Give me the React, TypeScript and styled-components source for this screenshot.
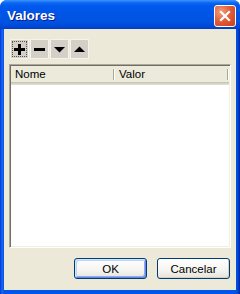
import styled, { createGlobalStyle } from "styled-components";

const GlobalStyle = createGlobalStyle`
    html, body {
        margin: 0;
        padding: 0;
        background: #ffffff;
    }
    * {
        box-sizing: border-box;
    }
`;

const Window = styled.div`
    width: 240px;
    height: 294px;
    display: flex;
    flex-direction: column;
    background: linear-gradient(to right, #0831d9 0px, #166aee 2px, #0055ea 4px, #0055ea 236px, #0046d3 238px, #001ea0 240px);
    border-radius: 7px 7px 0 0;
    overflow: hidden;
    font-family: "Liberation Sans", Arial, sans-serif;
`;

const TitleBar = styled.div`
    height: 29px;
    flex-shrink: 0;
    display: flex;
    align-items: center;
    justify-content: space-between;
    padding: 0 4px 0 7px;
    background: linear-gradient(to bottom, #3d95ff 0px, #0a66f0 3px, #0058ee 6px, #0055e5 14px, #0053e1 22px, #0046d5 27px, #003dc4 29px);
`;

const Title = styled.span`
    color: #ffffff;
    font-weight: bold;
    font-size: 13.5px;
    text-shadow: 1px 1px 0 #0a1b8a;
    padding-top: 2px;
`;

const CloseButton = styled.div`
    width: 22px;
    height: 22px;
    border: 1px solid #ffffff;
    border-radius: 3px;
    background: radial-gradient(circle at 30% 30%, #f2a07f 0%, #e35f3c 45%, #c73d1a 100%);
    display: flex;
    align-items: center;
    justify-content: center;
    margin-top: 3px;
`;

const Body = styled.div`
    flex: 1;
    margin: 0 4px 4px 4px;
    background: #ece9d8;
    display: flex;
    flex-direction: column;
    padding: 10px 5px 11px 5px;
`;

const Toolbar = styled.div`
    display: flex;
    flex-direction: row;
    gap: 1px;
    padding-left: 1px;
    height: 20px;
`;

const ToolButton = styled.button<{ $focused?: boolean }>`
    width: 19px;
    height: 20px;
    padding: 0;
    margin: 0;
    background: #d4d0c8;
    border: 1px solid #f4f3ee;
    outline: ${props => (props.$focused ? "1px dotted #555" : "none")};
    outline-offset: -3px;
    display: flex;
    align-items: center;
    justify-content: center;
`;

const ListView = styled.div`
    flex: 1;
    margin-top: 5px;
    background: #ffffff;
    border-top: 1px solid #aca899;
    border-left: 1px solid #aca899;
    border-right: 1px solid #ffffff;
    border-bottom: 1px solid #ffffff;
    box-shadow: inset 1px 1px 0 #716f64, inset -1px -1px 0 #f1efe2;
    padding: 1px;
    display: flex;
    flex-direction: column;
`;

const HeaderRow = styled.div`
    height: 19px;
    display: flex;
    flex-direction: row;
    background: #ebeadb;
    box-shadow: inset 0 -1px 0 #e2decd, inset 0 -2px 0 #d6d2c2, inset 0 -3px 0 #cbc7b8;
`;

const HeaderCell = styled.div<{ $width: number }>`
    width: ${props => props.$width}px;
    height: 100%;
    display: flex;
    align-items: center;
    padding: 0 0 3px 4px;
    font-size: 11.5px;
    color: #000000;
    position: relative;
    &::after {
        content: "";
        position: absolute;
        right: 0;
        top: 3px;
        bottom: 5px;
        width: 2px;
        background: linear-gradient(to right, #aca899 1px, #ffffff 1px);
    }
`;

const Footer = styled.div`
    display: flex;
    flex-direction: row;
    justify-content: flex-end;
    gap: 10px;
    margin-top: 10px;
    padding-right: 1px;
`;

const DialogButton = styled.button<{ $default?: boolean }>`
    width: 73px;
    height: 21px;
    padding: 0;
    border: 1px solid #003c74;
    border-radius: 3px;
    background: linear-gradient(to bottom, #ffffff 0%, #f5f4f0 60%, #e3e2da 100%);
    box-shadow: ${props =>
        props.$default
            ? "inset 1px 1px 0 #cee7ff, inset -1px -1px 0 #6982ee, inset 2px 2px 0 #bcd4f6, inset -2px -2px 0 #89adf1"
            : "inset -1px -1px 0 #d6d0c5"};
    font-family: "Liberation Sans", Arial, sans-serif;
    font-size: 11.5px;
    color: #000000;
`;

const PlusIcon = () => (
    <svg width="11" height="11" viewBox="0 0 11 11">
        <rect x="4" y="0" width="3" height="11" fill="#000" />
        <rect x="0" y="4" width="11" height="3" fill="#000" />
    </svg>
);

const MinusIcon = () => (
    <svg width="11" height="11" viewBox="0 0 11 11">
        <rect x="0" y="4" width="11" height="3" fill="#000" />
    </svg>
);

const DownIcon = () => (
    <svg width="11" height="11" viewBox="0 0 11 11">
        <polygon points="0,3 11,3 5.5,8.5" fill="#000" />
    </svg>
);

const UpIcon = () => (
    <svg width="11" height="11" viewBox="0 0 11 11">
        <polygon points="0,8 11,8 5.5,2.5" fill="#000" />
    </svg>
);

const CloseIcon = () => (
    <svg width="12" height="12" viewBox="0 0 12 12">
        <path d="M2 2 L10 10 M10 2 L2 10" stroke="#fff" strokeWidth="2.2" strokeLinecap="square" />
    </svg>
);

const App = () => {
    return (
        <>
            <GlobalStyle />
            <Window>
                <TitleBar>
                    <Title>Valores</Title>
                    <CloseButton>
                        <CloseIcon />
                    </CloseButton>
                </TitleBar>
                <Body>
                    <Toolbar>
                        <ToolButton $focused>
                            <PlusIcon />
                        </ToolButton>
                        <ToolButton>
                            <MinusIcon />
                        </ToolButton>
                        <ToolButton>
                            <DownIcon />
                        </ToolButton>
                        <ToolButton>
                            <UpIcon />
                        </ToolButton>
                    </Toolbar>
                    <ListView>
                        <HeaderRow>
                            <HeaderCell $width={104}>Nome</HeaderCell>
                            <HeaderCell $width={114}>Valor</HeaderCell>
                        </HeaderRow>
                    </ListView>
                    <Footer>
                        <DialogButton $default>OK</DialogButton>
                        <DialogButton>Cancelar</DialogButton>
                    </Footer>
                </Body>
            </Window>
        </>
    );
};

export default App;
